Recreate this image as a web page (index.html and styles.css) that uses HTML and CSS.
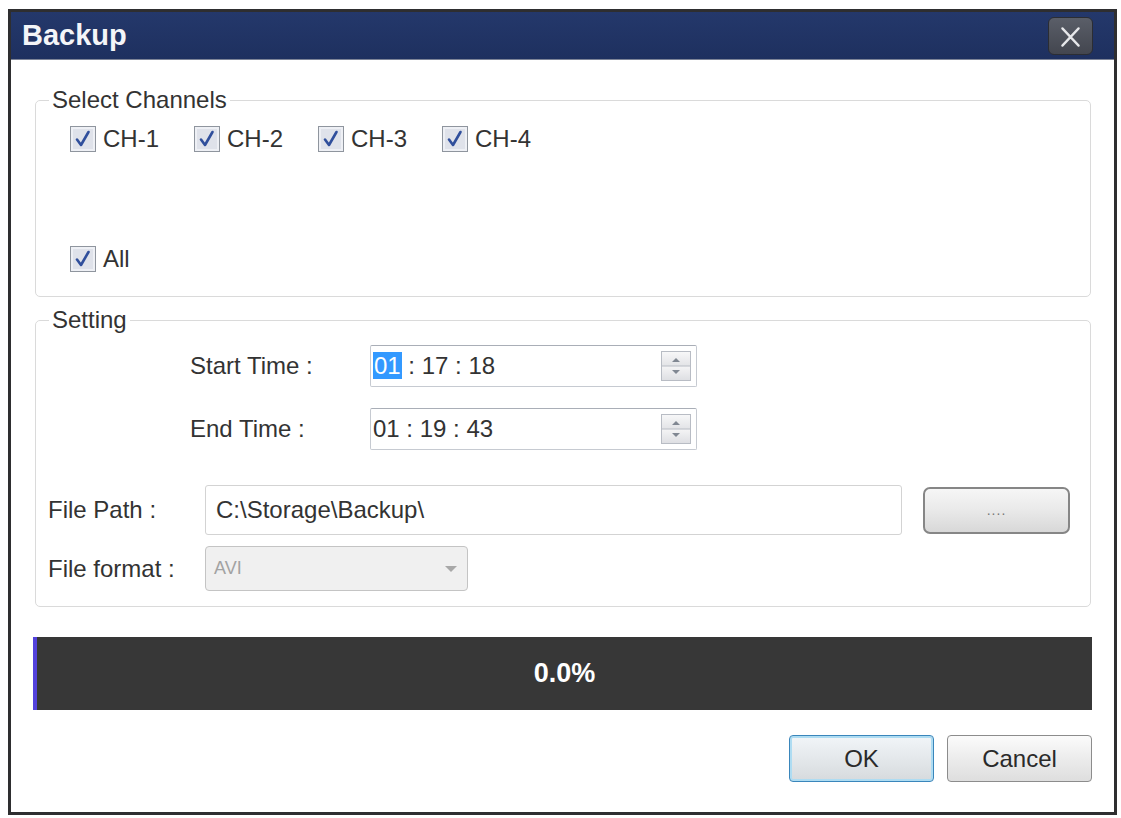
FILE: index.html
```html
<!DOCTYPE html>
<html lang="en">
<head>
    <meta charset="UTF-8">
    <meta name="viewport" content="width=device-width, initial-scale=1.0">
    <title>Backup</title>
    <link rel="stylesheet" href="styles.css">
</head>
<body>

<div class="dialog">
    <div class="titlebar">
        <span class="title">Backup</span>
        <button class="close" type="button" aria-label="Close">
            <svg width="45" height="38" viewBox="0 0 45 38">
                <path d="M14 10 L31 28 M31 10 L14 28" stroke="#e6e7ea" stroke-width="2.4" stroke-linecap="round"/>
            </svg>
        </button>
    </div>

    <div class="content">
        <!-- Channel selection -->
        <fieldset class="group channels">
            <legend>Select Channels</legend>
            <div class="ch-row">
                <label class="check"><span class="box"></span>CH-1</label>
                <label class="check"><span class="box"></span>CH-2</label>
                <label class="check"><span class="box"></span>CH-3</label>
                <label class="check"><span class="box"></span>CH-4</label>
            </div>
            <div class="ch-row all-row">
                <label class="check"><span class="box"></span>All</label>
            </div>
        </fieldset>

        <!-- Time range and output -->
        <fieldset class="group setting">
            <legend>Setting</legend>
            <div class="time-row">
                <span class="time-label">Start Time :</span>
                <div class="time-field">
                    <span class="time-text"><span class="sel">01</span> : 17 : 18</span>
                    <span class="spin"></span>
                </div>
            </div>
            <div class="time-row second">
                <span class="time-label">End Time :</span>
                <div class="time-field">
                    <span class="time-text">01 : 19 : 43</span>
                    <span class="spin"></span>
                </div>
            </div>
            <div class="path-row">
                <span class="field-label">File Path :</span>
                <div class="path-field">C:\Storage\Backup\</div>
                <button class="browse" type="button">....</button>
            </div>
            <div class="format-row">
                <span class="field-label">File format :</span>
                <div class="select">AVI<span class="caret"></span></div>
            </div>
        </fieldset>

        <div class="progress"><span>0.0%</span></div>

        <div class="actions">
            <button class="btn primary" type="button">OK</button>
            <button class="btn" type="button">Cancel</button>
        </div>
    </div>
</div>

</body>
</html>
```

FILE: styles.css
```css
body {
    margin: 0;
    background-color: #fff;
    font-family: "Liberation Sans", Arial, sans-serif;
    color: #333;
}

.dialog {
    box-sizing: border-box;
    width: 1109px;
    height: 806px;
    margin: 9px 0 0 8px;
    border: 3px solid #2e2e30;
    display: flex;
    flex-direction: column;
    background-color: #fff;
}

.titlebar {
    height: 47px;
    border-bottom: 1px solid #7d8497;
    background: linear-gradient(#24386b, #1e305f);
    display: flex;
    align-items: center;
    justify-content: space-between;
    padding: 0 21px 0 11px;
}

.title {
    color: #f4f5f8;
    font-size: 29px;
    font-weight: bold;
}

.close {
    width: 45px;
    height: 38px;
    padding: 0;
    border: 1px solid #2b2d33;
    border-radius: 6px;
    background: linear-gradient(#5a5e68, #43464f);
    display: flex;
}

.content {
    flex: 1;
    padding: 0 23px 0 24px;
}

.group {
    margin: 0;
    min-width: 0;
    border: 1px solid #dadada;
    border-radius: 5px;
    padding: 11px 12px 0 12px;
}

.group legend {
    font-size: 24px;
    line-height: 28px;
    padding: 0 3px;
    margin-left: 1px;
}

.channels {
    margin-top: 26px;
    padding-bottom: 23px;
}

.ch-row {
    display: flex;
    height: 28px;
    margin-left: 22px;
}

.all-row {
    margin-top: 92px;
}

.check {
    display: flex;
    align-items: center;
    width: 124px;
    font-size: 24px;
}

.all-row .check {
    width: auto;
}

.box {
    box-sizing: border-box;
    width: 26px;
    height: 26px;
    margin-right: 7px;
    border: 1px solid #8f959e;
    background-color: #dfe2ea;
    background-image: url("data:image/svg+xml,%3Csvg xmlns='http://www.w3.org/2000/svg' width='24' height='24' viewBox='0 0 24 24'%3E%3Cpath d='M6 12.5 L10 18 L17.5 5' fill='none' stroke='%23304f9c' stroke-width='2.6' stroke-linecap='round' stroke-linejoin='round'/%3E%3C/svg%3E");
    background-repeat: no-repeat;
    box-shadow: inset 0 0 0 2px #eef0f5;
}

.setting {
    margin-top: 9px;
    padding-bottom: 15px;
}

.time-row {
    display: flex;
    align-items: center;
    margin-left: 142px;
}

.time-row.second {
    margin-top: 21px;
}

.time-label {
    width: 180px;
    font-size: 24px;
}

.time-field {
    box-sizing: border-box;
    width: 327px;
    height: 42px;
    border: 1px solid #c6cad1;
    border-top-color: #a9aeb7;
    border-radius: 2px;
    display: flex;
    align-items: center;
    justify-content: space-between;
    padding: 0 5px 0 2px;
}

.time-text {
    font-size: 24px;
}

.sel {
    background-color: #3399ff;
    color: #fff;
    padding: 0 1px;
}

.spin {
    box-sizing: border-box;
    width: 30px;
    height: 30px;
    border: 1px solid #b8bcc4;
    background-image:
        url("data:image/svg+xml,%3Csvg xmlns='http://www.w3.org/2000/svg' width='28' height='28' viewBox='0 0 28 28'%3E%3Cpath d='M10 10 L14 6 L18 10 Z' fill='%23808792'/%3E%3Cpath d='M10 18 L14 22 L18 18 Z' fill='%23808792'/%3E%3Cpath d='M0 14 H28' stroke='%23b8bcc4' stroke-width='1'/%3E%3C/svg%3E"),
        linear-gradient(#f7f7f8, #e3e4e7 48%, #f4f4f5 52%, #dedfe3);
}

.path-row {
    display: flex;
    align-items: center;
    margin-top: 35px;
}

.field-label {
    width: 157px;
    font-size: 24px;
}

.path-field {
    box-sizing: border-box;
    width: 697px;
    height: 50px;
    border: 1px solid #d3d3d3;
    border-radius: 3px;
    padding: 0 10px;
    display: flex;
    align-items: center;
    font-size: 24px;
}

.browse {
    box-sizing: border-box;
    width: 147px;
    height: 47px;
    margin-left: 21px;
    border: 2px solid #868686;
    border-radius: 7px;
    background: linear-gradient(#f6f6f6, #e9e9e9 50%, #d8d8d8);
    color: #777;
    font-family: "Liberation Sans", Arial, sans-serif;
    font-size: 14px;
    letter-spacing: 1px;
}

.format-row {
    display: flex;
    align-items: center;
    margin-top: 11px;
}

.select {
    box-sizing: border-box;
    width: 263px;
    height: 45px;
    border: 1px solid #c4c4c4;
    border-radius: 4px;
    background-color: #f0f0f0;
    color: #a2a2a2;
    font-size: 18px;
    padding: 0 10px 0 8px;
    display: flex;
    align-items: center;
    justify-content: space-between;
}

.caret {
    width: 0;
    height: 0;
    border-left: 6px solid transparent;
    border-right: 6px solid transparent;
    border-top: 6px solid #a8a8a8;
}

.progress {
    height: 73px;
    margin: 30px -1px 0 -2px;
    background-color: #373737;
    border-left: 4px solid #5342dc;
    display: flex;
    align-items: center;
    justify-content: center;
    color: #fff;
    font-size: 27px;
    font-weight: bold;
}

.actions {
    display: flex;
    justify-content: flex-end;
    gap: 13px;
    margin: 25px -1px 0 0;
}

.btn {
    box-sizing: border-box;
    width: 145px;
    height: 47px;
    border: 1px solid #8c8c8c;
    border-radius: 4px;
    background: linear-gradient(#fbfbfb, #ececec 50%, #dedede);
    color: #2a2a2a;
    font-family: "Liberation Sans", Arial, sans-serif;
    font-size: 24px;
}

.btn.primary {
    border-color: #3a86bb;
    box-shadow: inset 0 0 0 2px #aedcf2;
    background: linear-gradient(#f1f5f8, #e4e8eb 50%, #d6dadd);
}
```
